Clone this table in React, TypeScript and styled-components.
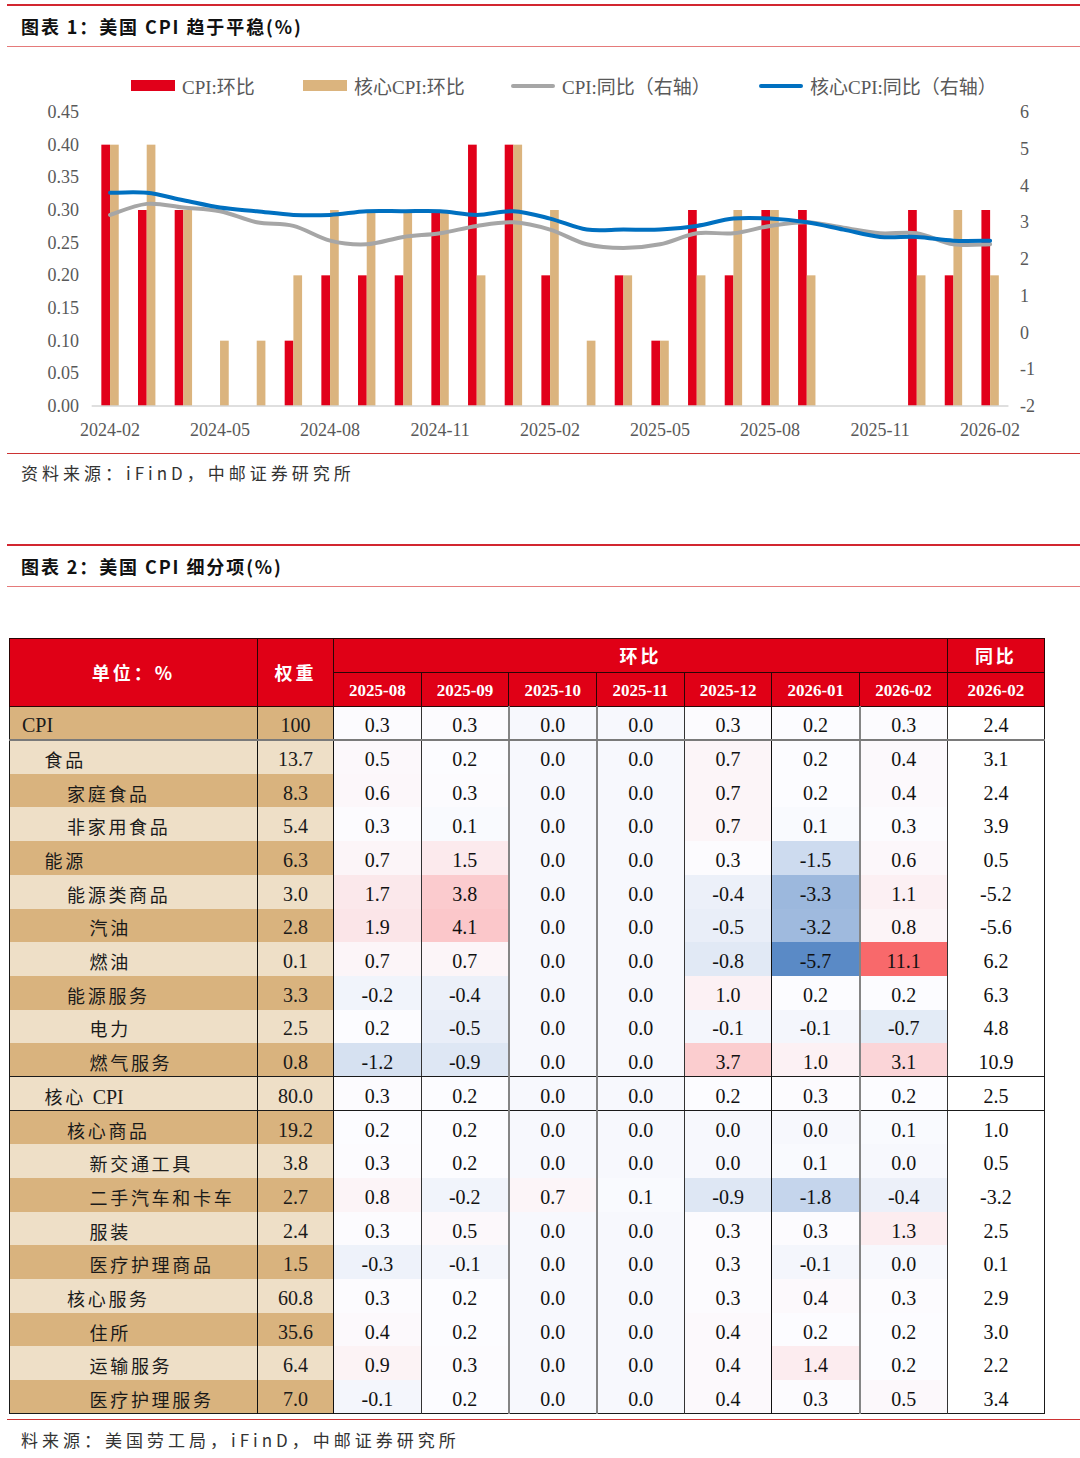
import React from "react";
import styled, { createGlobalStyle } from "styled-components";

const GlobalStyle = createGlobalStyle`
  html, body { margin: 0; padding: 0; background: #ffffff; }
  body { font-family: "Liberation Serif", "Noto Sans CJK SC", serif; }
`;

const Page = styled.div`
  width: 1080px;
  height: 1458px;
  overflow: hidden;
  background: #ffffff;
  display: flex;
  flex-direction: column;
`;

const SectionHeader = styled.div<{ $top: number }>`
  margin-top: ${(p) => p.$top}px;
  margin-left: 7px;
  height: 40px;
  border-top: 2px solid #d22630;
  border-bottom: 1px solid #e57a7a;
  display: flex;
  align-items: center;
  padding-left: 14px;
  font-family: "Noto Sans CJK SC", sans-serif;
  font-weight: 700;
  font-size: 18px;
  letter-spacing: 1.9px;
  color: #111111;
`;

const ChartArea = styled.div`
  height: 406px;
  display: flex;
  flex-direction: column;
`;

const Legend = styled.div`
  display: flex;
  align-items: center;
  height: 20px;
  margin-top: 29px;
  padding-left: 131px;
  font-family: "Liberation Serif", "Noto Sans CJK SC", serif;
  font-size: 19px;
  color: #595959;
`;

const LegendItem = styled.div<{ $w?: number }>`
  display: flex;
  align-items: center;
  gap: 7px;
  flex: none;
  width: ${(p) => (p.$w ? `${p.$w}px` : "auto")};
  white-space: nowrap;
`;

const Swatch = styled.span<{ $color: string; $line?: boolean }>`
  display: block;
  width: 44px;
  height: ${(p) => (p.$line ? 4 : 11)}px;
  border-radius: ${(p) => (p.$line ? 2 : 0)}px;
  background: ${(p) => p.$color};
`;

const Plot = styled.svg`
  display: block;
  width: 1080px;
  height: 357px;
`;

const SourceBar = styled.div<{ $top?: number }>`
  margin-top: ${(p) => p.$top ?? 0}px;
  margin-left: 7px;
  border-top: 1px solid #cc3333;
  height: 38px;
  display: flex;
  align-items: center;
  padding-left: 14px;
  font-family: "Noto Sans CJK SC", sans-serif;
  font-size: 17px;
  letter-spacing: 4px;
  color: #333333;
`;

const Table = styled.table`
  margin: 51px 0 0 9px;
  border-collapse: collapse;
  table-layout: fixed;
  width: 1035px;
  border: 1.5px solid #1a1a1a;
`;

const Col = styled.col<{ $w: number }>`
  width: ${(p) => p.$w}px;
`;

const HeadRow = styled.tr`
  height: 34px;
`;

const HeadCell = styled.th<{ $cjk?: boolean }>`
  background: #e00016;
  color: #ffffff;
  border: 1px solid #2a0505;
  padding: ${(p) => (p.$cjk ? "0" : "4px 0 0")};
  text-align: center;
  font-family: ${(p) =>
    p.$cjk ? `"Noto Sans CJK SC", sans-serif` : `"Liberation Serif", serif`};
  font-weight: 700;
  font-size: ${(p) => (p.$cjk ? 18 : 17)}px;
  letter-spacing: ${(p) => (p.$cjk ? 3 : 0)}px;
`;

const BodyRow = styled.tr<{ $rule?: "gray" | "dark" }>`
  height: 33.7px;
  & > td {
    border-bottom: ${(p) =>
      p.$rule === "gray"
        ? "2px solid #7a7a7a"
        : p.$rule === "dark"
        ? "1px solid #1a1a1a"
        : "none"};
  }
`;

const NameCell = styled.td<{ $dark: boolean; $level: number }>`
  background: ${(p) => (p.$dark ? "#d9b37e" : "#eedfc7")};
  padding: 4px 0 0 ${(p) => 12 + p.$level * 22.5}px;
  border-right: 1px solid #111111;
  font-family: "Liberation Serif", "Noto Sans CJK SC", serif;
  font-size: 20px;
  color: #1a1a1a;
  white-space: nowrap;
`;

const Cjk = styled.span`
  font-family: "Noto Sans CJK SC", sans-serif;
  font-size: 18px;
  letter-spacing: 2.7px;
`;

const WeightCell = styled.td<{ $dark: boolean }>`
  background: ${(p) => (p.$dark ? "#d9b37e" : "#eedfc7")};
  border-right: 1px solid #111111;
  padding: 5px 0 0;
  text-align: center;
  font-family: "Liberation Serif", serif;
  font-size: 20px;
  color: #1a1a1a;
`;

const ValueCell = styled.td<{ $rb: string }>`
  border-right: ${(p) => p.$rb};
  padding: 5px 0 0;
  text-align: center;
  font-family: "Liberation Serif", serif;
  font-size: 20px;
  color: #111111;
  background: #ffffff;
`;

/* ---------------- chart data ---------------- */
const X0 = 91.7;
const CW = 36.67;
const N = 25;
const cx = (i: number) => X0 + CW * (i + 0.5);
const yL = (v: number) => 310 - (v / 0.45) * 294;
const yR = (v: number) => 310 - ((v + 2) / 8) * 294;

const redBars = [0.4, 0.3, 0.3, 0, 0, 0.1, 0.2, 0.2, 0.2, 0.3, 0.4, 0.4, 0.2, 0, 0.2, 0.1, 0.3, 0.2, 0.3, 0.3, 0, 0, 0.3, 0.2, 0.3];
const tanBars = [0.4, 0.4, 0.3, 0.1, 0.1, 0.2, 0.3, 0.3, 0.3, 0.3, 0.2, 0.4, 0.3, 0.1, 0.2, 0.1, 0.2, 0.3, 0.3, 0.2, 0, 0, 0.2, 0.3, 0.2];
const coreYoY = [3.8, 3.8, 3.6, 3.4, 3.3, 3.2, 3.2, 3.3, 3.3, 3.3, 3.2, 3.3, 3.1, 2.8, 2.8, 2.8, 2.9, 3.1, 3.1, 3.0, 2.8, 2.6, 2.6, 2.5, 2.5];
const cpiYoY = [3.2, 3.5, 3.4, 3.3, 3.0, 2.9, 2.5, 2.4, 2.6, 2.7, 2.9, 3.0, 2.8, 2.4, 2.3, 2.4, 2.7, 2.7, 2.9, 3.0, 2.85, 2.7, 2.7, 2.4, 2.4];
const xLabels = ["2024-02", "2024-05", "2024-08", "2024-11", "2025-02", "2025-05", "2025-08", "2025-11", "2026-02"];

function smoothPath(vals: number[]) {
  const pts = vals.map((v, i) => [cx(i), yR(v)]);
  let d = `M${pts[0][0].toFixed(2)},${pts[0][1].toFixed(2)}`;
  const t = 1 / 6;
  for (let i = 0; i < pts.length - 1; i++) {
    const p0 = pts[i - 1] || pts[i];
    const p1 = pts[i];
    const p2 = pts[i + 1];
    const p3 = pts[i + 2] || p2;
    const c1x = p1[0] + (p2[0] - p0[0]) * t;
    const c1y = p1[1] + (p2[1] - p0[1]) * t;
    const c2x = p2[0] - (p3[0] - p1[0]) * t;
    const c2y = p2[1] - (p3[1] - p1[1]) * t;
    d += ` C${c1x.toFixed(2)},${c1y.toFixed(2)} ${c2x.toFixed(2)},${c2y.toFixed(2)} ${p2[0].toFixed(2)},${p2[1].toFixed(2)}`;
  }
  return d;
}

const AXIS_TEXT = { fontFamily: "Liberation Serif, serif", fontSize: 18, fill: "#595959" };

function Chart() {
  const leftTicks = [0, 0.05, 0.1, 0.15, 0.2, 0.25, 0.3, 0.35, 0.4, 0.45];
  const rightTicks = [-2, -1, 0, 1, 2, 3, 4, 5, 6];
  const bw = 8.7;
  return (
    <Plot viewBox="0 0 1080 357">
      {redBars.map((v, i) =>
        v > 0 ? (
          <rect key={`r${i}`} x={cx(i) - bw} y={yL(v)} width={bw} height={310 - yL(v)} fill="#e1001a" />
        ) : null
      )}
      {tanBars.map((v, i) =>
        v > 0 ? (
          <rect key={`t${i}`} x={cx(i)} y={yL(v)} width={bw} height={310 - yL(v)} fill="#dbb47e" />
        ) : null
      )}
      <line x1={X0} x2={X0 + CW * N} y1={310} y2={310} stroke="#d4d4d4" strokeWidth={1.5} />
      <path d={smoothPath(cpiYoY)} fill="none" stroke="#a6a6a6" strokeWidth={4} strokeLinecap="round" strokeLinejoin="round" />
      <path d={smoothPath(coreYoY)} fill="none" stroke="#0070c0" strokeWidth={4} strokeLinecap="round" strokeLinejoin="round" />
      {leftTicks.map((v) => (
        <text key={`l${v}`} x={79} y={yL(v)} textAnchor="end" dominantBaseline="central" style={AXIS_TEXT}>
          {v.toFixed(2)}
        </text>
      ))}
      {rightTicks.map((v) => (
        <text key={`rt${v}`} x={1020} y={yR(v)} textAnchor="start" dominantBaseline="central" style={AXIS_TEXT}>
          {v}
        </text>
      ))}
      {xLabels.map((l, k) => (
        <text key={l} x={cx(k * 3)} y={334} textAnchor="middle" dominantBaseline="central" style={AXIS_TEXT}>
          {l}
        </text>
      ))}
    </Plot>
  );
}

/* ---------------- table data ---------------- */
type Row = { name: string; level: number; w: string; mom: number[]; yoy: string; rule?: "gray" | "dark" };

const rows: Row[] = [
  { name: "CPI", level: 0, w: "100", mom: [0.3, 0.3, 0.0, 0.0, 0.3, 0.2, 0.3], yoy: "2.4", rule: "gray" },
  { name: "食品", level: 1, w: "13.7", mom: [0.5, 0.2, 0.0, 0.0, 0.7, 0.2, 0.4], yoy: "3.1" },
  { name: "家庭食品", level: 2, w: "8.3", mom: [0.6, 0.3, 0.0, 0.0, 0.7, 0.2, 0.4], yoy: "2.4" },
  { name: "非家用食品", level: 2, w: "5.4", mom: [0.3, 0.1, 0.0, 0.0, 0.7, 0.1, 0.3], yoy: "3.9" },
  { name: "能源", level: 1, w: "6.3", mom: [0.7, 1.5, 0.0, 0.0, 0.3, -1.5, 0.6], yoy: "0.5" },
  { name: "能源类商品", level: 2, w: "3.0", mom: [1.7, 3.8, 0.0, 0.0, -0.4, -3.3, 1.1], yoy: "-5.2" },
  { name: "汽油", level: 3, w: "2.8", mom: [1.9, 4.1, 0.0, 0.0, -0.5, -3.2, 0.8], yoy: "-5.6" },
  { name: "燃油", level: 3, w: "0.1", mom: [0.7, 0.7, 0.0, 0.0, -0.8, -5.7, 11.1], yoy: "6.2" },
  { name: "能源服务", level: 2, w: "3.3", mom: [-0.2, -0.4, 0.0, 0.0, 1.0, 0.2, 0.2], yoy: "6.3" },
  { name: "电力", level: 3, w: "2.5", mom: [0.2, -0.5, 0.0, 0.0, -0.1, -0.1, -0.7], yoy: "4.8" },
  { name: "燃气服务", level: 3, w: "0.8", mom: [-1.2, -0.9, 0.0, 0.0, 3.7, 1.0, 3.1], yoy: "10.9", rule: "dark" },
  { name: "核心 CPI", level: 1, w: "80.0", mom: [0.3, 0.2, 0.0, 0.0, 0.2, 0.3, 0.2], yoy: "2.5", rule: "dark" },
  { name: "核心商品", level: 2, w: "19.2", mom: [0.2, 0.2, 0.0, 0.0, 0.0, 0.0, 0.1], yoy: "1.0" },
  { name: "新交通工具", level: 3, w: "3.8", mom: [0.3, 0.2, 0.0, 0.0, 0.0, 0.1, 0.0], yoy: "0.5" },
  { name: "二手汽车和卡车", level: 3, w: "2.7", mom: [0.8, -0.2, 0.7, 0.1, -0.9, -1.8, -0.4], yoy: "-3.2" },
  { name: "服装", level: 3, w: "2.4", mom: [0.3, 0.5, 0.0, 0.0, 0.3, 0.3, 1.3], yoy: "2.5" },
  { name: "医疗护理商品", level: 3, w: "1.5", mom: [-0.3, -0.1, 0.0, 0.0, 0.3, -0.1, 0.0], yoy: "0.1" },
  { name: "核心服务", level: 2, w: "60.8", mom: [0.3, 0.2, 0.0, 0.0, 0.3, 0.4, 0.3], yoy: "2.9" },
  { name: "住所", level: 3, w: "35.6", mom: [0.4, 0.2, 0.0, 0.0, 0.4, 0.2, 0.2], yoy: "3.0" },
  { name: "运输服务", level: 3, w: "6.4", mom: [0.9, 0.3, 0.0, 0.0, 0.4, 1.4, 0.2], yoy: "2.2" },
  { name: "医疗护理服务", level: 3, w: "7.0", mom: [-0.1, 0.2, 0.0, 0.0, 0.4, 0.3, 0.5], yoy: "3.4" },
];

const months = ["2025-08", "2025-09", "2025-10", "2025-11", "2025-12", "2026-01", "2026-02"];
const monthBorders = [
  "1px solid #333333",
  "2px solid #858585",
  "2px solid #858585",
  "1px solid #333333",
  "1px solid #111111",
  "2px solid #858585",
  "1px solid #333333",
];

const MIN = -5.7;
const MID = 0.2;
const MAX = 11.1;
const LO = [90, 138, 198];
const MD = [252, 252, 255];
const HI = [248, 105, 107];

function heat(v: number) {
  let a = MD;
  let b = MD;
  let t = 0;
  if (v <= MID) {
    a = LO;
    b = MD;
    t = (v - MIN) / (MID - MIN);
  } else {
    a = MD;
    b = HI;
    t = (v - MID) / (MAX - MID);
  }
  t = Math.max(0, Math.min(1, t));
  const c = a.map((x, k) => Math.round(x + (b[k] - x) * t));
  return `rgb(${c[0]},${c[1]},${c[2]})`;
}

function Name({ text }: { text: string }) {
  const parts = text.split(/([A-Za-z]+)/).filter((s) => s.length > 0);
  return (
    <>
      {parts.map((s, k) => (/^[A-Za-z]+$/.test(s) ? <span key={k}>{s}</span> : <Cjk key={k}>{s}</Cjk>))}
    </>
  );
}

function CpiTable() {
  return (
    <Table>
      <colgroup>
        <Col $w={248} />
        <Col $w={76} />
        {months.map((m) => (
          <Col key={m} $w={87.7} />
        ))}
        <Col $w={97.1} />
      </colgroup>
      <thead>
        <HeadRow>
          <HeadCell $cjk rowSpan={2}>
            单位：%
          </HeadCell>
          <HeadCell $cjk rowSpan={2}>
            权重
          </HeadCell>
          <HeadCell $cjk colSpan={7}>
            环比
          </HeadCell>
          <HeadCell $cjk>同比</HeadCell>
        </HeadRow>
        <HeadRow>
          {months.map((m) => (
            <HeadCell key={m}>{m}</HeadCell>
          ))}
          <HeadCell>2026-02</HeadCell>
        </HeadRow>
      </thead>
      <tbody>
        {rows.map((r, i) => {
          const dark = i % 2 === 0;
          return (
            <BodyRow key={r.name} $rule={r.rule}>
              <NameCell $dark={dark} $level={r.level}>
                <Name text={r.name} />
              </NameCell>
              <WeightCell $dark={dark}>{r.w}</WeightCell>
              {r.mom.map((v, k) => (
                <ValueCell key={k} $rb={monthBorders[k]} style={{ background: heat(v) }}>
                  {v.toFixed(1)}
                </ValueCell>
              ))}
              <ValueCell $rb="1.5px solid #1a1a1a">{r.yoy}</ValueCell>
            </BodyRow>
          );
        })}
      </tbody>
    </Table>
  );
}

export default function App() {
  return (
    <>
      <GlobalStyle />
      <Page>
        <SectionHeader $top={4}>图表 1：美国 CPI 趋于平稳(%)</SectionHeader>
        <ChartArea>
          <Legend>
            <LegendItem $w={172}>
              <Swatch $color="#e1001a" />
              <span>CPI:环比</span>
            </LegendItem>
            <LegendItem $w={208}>
              <Swatch $color="#dbb47e" />
              <span>核心CPI:环比</span>
            </LegendItem>
            <LegendItem $w={248}>
              <Swatch $color="#a6a6a6" $line />
              <span>CPI:同比（右轴）</span>
            </LegendItem>
            <LegendItem>
              <Swatch $color="#0070c0" $line />
              <span>核心CPI:同比（右轴）</span>
            </LegendItem>
          </Legend>
          <Chart />
        </ChartArea>
        <SourceBar>资料来源：iFinD，中邮证券研究所</SourceBar>
        <SectionHeader $top={53}>图表 2：美国 CPI 细分项(%)</SectionHeader>
        <CpiTable />
        <SourceBar $top={5}>料来源：美国劳工局，iFinD，中邮证券研究所</SourceBar>
      </Page>
    </>
  );
}
